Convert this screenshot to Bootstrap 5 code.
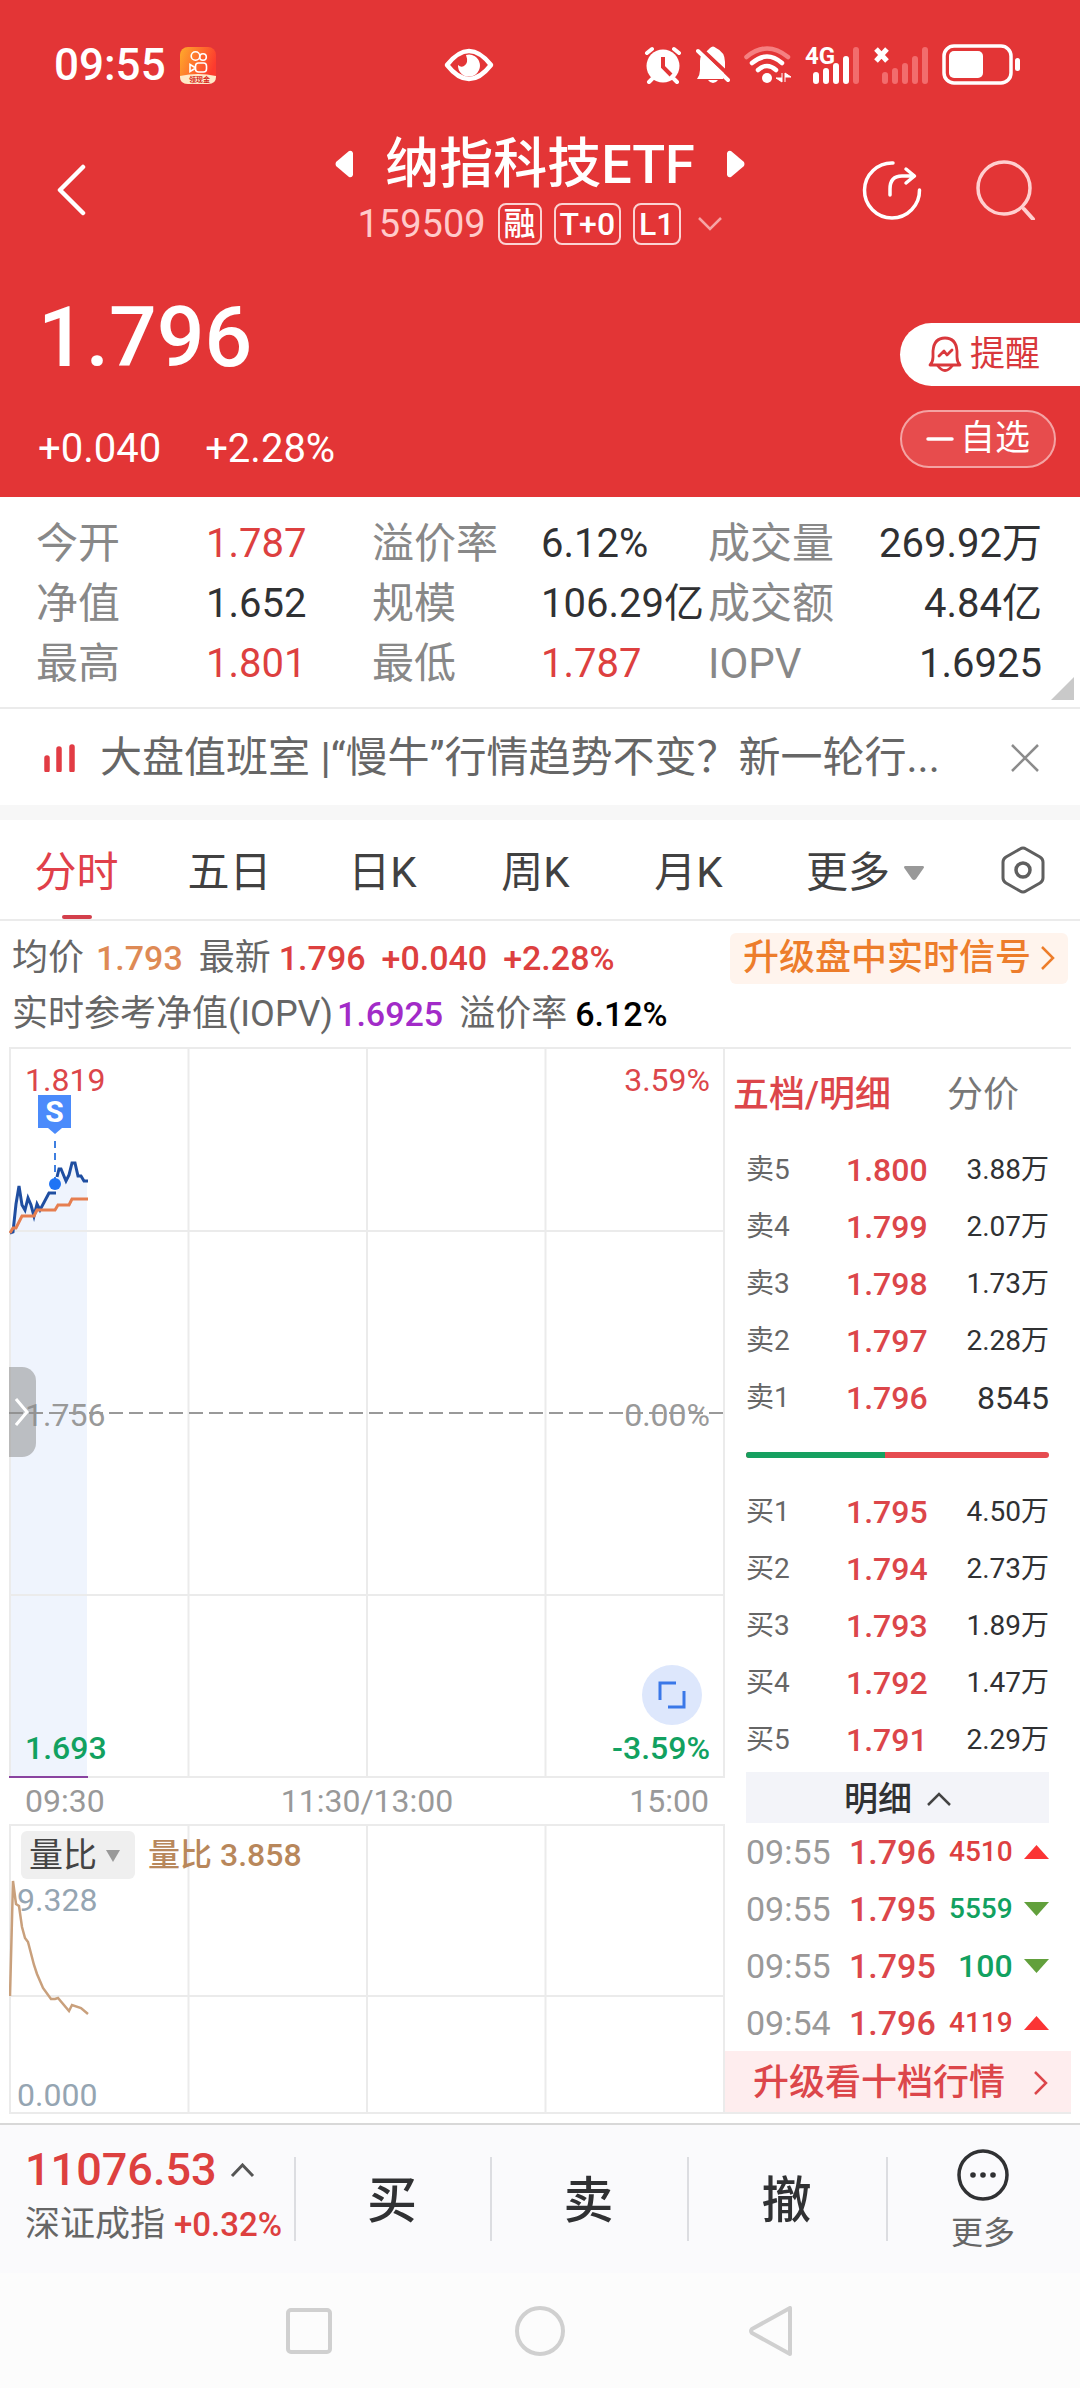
<!DOCTYPE html>
<html lang="zh-CN">
<head>
<meta charset="utf-8">
<meta name="viewport" content="width=device-width, initial-scale=1">
<title>纳指科技ETF 159509</title>
<link rel="stylesheet" href="https://cdn.jsdelivr.net/npm/bootstrap@5.3.0/dist/css/bootstrap.min.css">
<style>
  :root { --brand: #e33536; --up: #dd403f; --down: #12a160; --ink: #303133; --grid: #ebebeb; }
  body { font-family: Roboto, "Noto Sans CJK SC", sans-serif; color: var(--ink); background: #fff; line-height: 1; }
  button, select { font: inherit; color: inherit; background: none; border: 0; padding: 0; line-height: inherit; }
  svg { display: block; flex: none; }
  h1, dl, dd, dt, p { margin: 0; font-weight: inherit; }
  .up { color: var(--up); }
  .down { color: var(--down); }
  .num { font-weight: 500; }

  /* header */
  .quote-head { background: var(--brand); color: #fff; }
  .statusbar { height: 130px; display: grid; grid-template-columns: 390fr 50px 527fr; padding: 0 59px 0 54px; font-size: 44px; font-weight: 500; }
  .clock { gap: 14px; }
  .sys-icons { gap: 14px; }
  .titlebar { display: grid; grid-template-columns: 1fr auto 1fr; padding: 0 44px; height: 118px; }
  .back { padding-left: 12px; text-align: left; }
  .title-line { font-size: 54px; line-height: 66px; gap: 32px; font-weight: 500; }
  .title-line h1 { font-size: 54px; line-height: 66px; font-weight: 500; padding-top: 2px; }
  .sub-line { height: 52px; gap: 12px; }
  .code { font-size: 38px; color: #ffcaca; }
  .tagbox { border: 2px solid #fbd3d3; border-radius: 8px; height: 42px; line-height: 38px; font-size: 32px; padding: 0 4px; font-weight: 500; }
  .head-actions { gap: 54px; }
  .price-zone { padding: 40px 0 23px 38px; }
  .last-price { font-size: 84px; line-height: 100px; font-weight: 500; }
  .change-line { font-size: 40px; line-height: 50px; margin-top: 36px; gap: 44px; }
  .side-actions { width: 180px; padding-top: 45px; gap: 24px; }
  .btn-remind { width: 180px; height: 63px; border-radius: 32px 0 0 32px; background: #fff; color: #d9383c; font-size: 35px; gap: 8px; padding-left: 28px; }
  .btn-watch { width: 156px; height: 58px; border-radius: 30px; background: #e74c4d; border: 2px solid #f4a3a3; font-size: 35px; gap: 6px; }

  /* key figures */
  .figures { position: relative; display: grid; grid-template-columns: 170fr 166fr 169fr 167fr 130fr 204fr; padding: 17px 38px 13px 36px; line-height: 60px; border-bottom: 2px solid var(--grid); white-space: nowrap; }
  .figures dt { font-size: 42px; color: #888; }
  .figures dd { font-size: 40px; }
  .figures dd.last { text-align: right; }
  .corner { position: absolute; right: 6px; bottom: 7px; }

  .news { height: 96px; padding: 2px 41px 0 44px; gap: 25px; font-size: 42px; color: #666; }
  .news a { color: inherit; line-height: 60px; }
  .strip { height: 15px; background: #f7f7f7; }

  /* period tabs */
  .periods { display: grid; grid-template-columns: repeat(5, 153fr) 200fr 115fr; height: 101px; border-bottom: 2px solid var(--grid); font-size: 42px; color: #414141; }
  .periods button { padding-top: 6px; position: relative; }
  .periods .more { gap: 14px; }
  .periods .setup { padding-top: 0; }
  .periods .on { color: #e0404a; }
  .periods .on::after { content: ""; position: absolute; left: 50%; bottom: 0; width: 30px; height: 4px; margin-left: -15px; border-radius: 2px; background: #d33f4b; }

  .legend-rows { padding: 9px 12px 5px 12px; font-size: 36px; color: #666; }
  .legend-rows > div { height: 56px; }
  .legend-rows .num { font-size: 34px; }
  .signal-link { background: #fff4ed; color: #ed7d2b; border-radius: 6px; height: 51px; padding: 0 13px; gap: 10px; text-decoration: none; font-weight: 500; }

  /* chart and order book */
  .board { display: grid; grid-template-columns: 716fr 346fr; margin: 0 9px; border-bottom: 2px solid var(--grid); }
  .plot { position: relative; font-size: 32px; }
  .plot > svg { width: 100%; }
  .plot-main, .plot-main > svg { height: 731px; }
  .plot-sub, .plot-sub > svg { height: 288px; }
  .tick { position: absolute; line-height: 26px; }
  .tick-l { left: 16px; }
  .tick-r { right: 15px; }
  .tick-s { left: 8px; color: #95a5b2; }
  .tick-top { top: 20px; }
  .tick-mid { top: 355px; color: #999; }
  .tick-low { top: 688px; }
  .sell-flag { position: absolute; left: 29px; top: 48px; width: 33px; height: 33px; background: #4b8bfb; color: #fff; font-size: 30px; line-height: 33px; font-weight: 700; text-align: center; }
  .sell-flag::after { content: ""; position: absolute; left: 10px; top: 33px; border: 7px solid transparent; border-top: 6px solid #4b8bfb; border-bottom: 0; }
  .drawer { position: absolute; left: 0; top: 320px; width: 27px; height: 90px; border-radius: 0 14px 14px 0; background: rgba(140, 140, 140, .52); padding-left: 6px; }
  .expand { position: absolute; right: 23px; top: 618px; width: 60px; height: 60px; border-radius: 50%; background: #dde7fc; }
  .axis { display: grid; grid-template-columns: 1fr auto 1fr; padding: 0 16px; height: 46px; font-size: 32px; color: #999; }
  .sub-head { position: absolute; left: 12px; top: 7px; gap: 13px; color: #b8875b; }
  .pick { position: relative; }
  .pick select { appearance: none; width: 114px; height: 48px; padding: 0 0 0 8px; border-radius: 6px; background: #efefef; color: #444; font-size: 34px; line-height: 48px; }
  .pick svg { position: absolute; right: 14px; top: 19px; pointer-events: none; }

  .book { border-top: 2px solid var(--grid); }
  .book-tabs { height: 92px; padding: 0 52px 0 8px; font-size: 36px; color: #777; }
  .book-tabs .on { color: #dc464a; font-weight: 500; }
  .levels { width: 100%; table-layout: fixed; }
  .levels td, .levels th { height: 57px; padding: 0; vertical-align: middle; font-size: 28px; font-weight: 400; line-height: 32px; white-space: nowrap; }
  .levels th { color: #666; }
  .levels .px { font-size: 32px; color: #dc464a; font-weight: 500; }
  .book-body { padding: 0 22px 0 21px; }
  .bidask { height: 57px; }
  .bidask .progress { height: 6px; width: 100%; border-radius: 3px; background: #e64c50; }
  .bidask .progress-bar { background: #16a060; }
  .detail-head { width: 100%; height: 51px; margin-top: 4px; padding-top: 2px; background: #f3f4f9; font-size: 34px; font-weight: 500; gap: 15px; }
  .levels .tm { font-size: 34px; color: #999; }
  .levels .qty { font-weight: 500; }
  .trades .px { font-size: 34px; }
  .levels .big { font-size: 32px; }
  .ten-link { height: 61px; background: #feedee; color: #dc464a; font-size: 36px; padding: 3px 23px 0 28px; text-decoration: none; font-weight: 500; }

  /* trade bar */
  .tradebar { margin-top: 9px; height: 150px; background: #fafafc; border-top: 2px solid #d8d8d8; display: grid; grid-template-columns: 294fr 196fr 197fr 199fr 194fr; font-size: 50px; font-weight: 500; }
  .tradebar > * { position: relative; padding-top: 4px; }
  .tradebar > * + *::before { content: ""; position: absolute; left: 0; top: 32px; width: 2px; height: 84px; background: #dcdde1; }
  .tradebar .index-box { padding: 12px 0 26px 25px; text-align: left; white-space: nowrap; }
  .index-val { font-size: 45px; line-height: 66px; gap: 13px; }
  .index-name { font-size: 35px; line-height: 44px; color: #666; font-weight: 400; gap: 9px; }
  .index-name .num { font-size: 33px; }
  .tradebar .more-box { font-size: 32px; font-weight: 400; color: #666; gap: 16px; padding-top: 0; }
  .softkeys { height: 115px; background: #fcfcfc; gap: 183px; }
</style>
</head>
<body>
<header class="quote-head">
  <div class="statusbar align-items-center">
    <div class="clock d-flex align-items-center"><span>09:55</span>
      <svg width="36" height="37" viewBox="0 0 36 37"><defs><linearGradient id="ks" x1="0" y1="0" x2="1" y2="0.4"><stop offset="0" stop-color="#ffac2b"/><stop offset="1" stop-color="#fd3a2e"/></linearGradient></defs><rect width="36" height="37" rx="8" fill="url(#ks)"/><path d="M0 29Q18 25 36 29V30Q36 37 28 37H8Q0 37 0 30Z" fill="#ffe9c8"/><g fill="none" stroke="#fff" stroke-width="1.6"><circle cx="15.500" cy="9" r="4.300"/><circle cx="23" cy="10" r="3.300"/><rect x="15.500" y="16" width="11" height="9" rx="3"/><path d="M15 20.500l-5-3v7l5-3"/></g><text x="9" y="35" font-size="7" font-weight="700" fill="#d4281c">领现金</text></svg>
    </div>
    <svg width="50" height="34" viewBox="0 0 50 34"><path d="M3 17Q14 3 25 3T47 17Q36 31 25 31T3 17Z" fill="none" stroke="#fff" stroke-width="4.500" stroke-linejoin="round"/><path d="M22 7A11 11 0 1 1 14 17Q17 20 20 18Q25 15 22 7Z" fill="#fff"/></svg>
    <div class="sys-icons d-flex align-items-center justify-content-end">
      <svg width="38" height="38" viewBox="0 0 38 38"><circle cx="19" cy="20" r="16.500" fill="#fff"/><path d="M3 7l5-4M35 7l-5-4M8 33l-3 3M30 33l3 3" stroke="#fff" stroke-width="4" stroke-linecap="round"/><path d="M19 11v10l8 8" fill="none" stroke="#e33536" stroke-width="4"/></svg>
      <svg width="34" height="38" viewBox="0 0 34 38"><path d="M10 6Q13 3 14 2Q17-1 20 2Q29 6 29 16V22L27 33H1Q4 29 4 24V15Q4 12 5 10Z" fill="#fff"/><path d="M3 1L34 30" stroke="#e33536" stroke-width="4"/><path d="M2 5L32 34" stroke="#fff" stroke-width="4" stroke-linecap="round"/><path d="M12 34h10q-2 3-5 3t-5-3z" fill="#fff"/></svg>
      <svg width="47" height="38" viewBox="0 0 47 38"><g fill="none" stroke-width="4.500" stroke-linecap="round"><path d="M2.500 11Q23-6 44 11" stroke="#f58081"/><path d="M8 17Q23 4 38 17M14 24Q23 16 32 24" stroke="#fff"/></g><circle cx="23" cy="32" r="5" fill="#fff"/><path d="M38 27v9l-6-4h6M41 36v-9l6 4h-6" fill="#fff" stroke="#fff"/></svg>
      <svg width="55" height="50" viewBox="0 -6 55 50"><text x="0" y="18" font-size="24" font-weight="700" fill="#fff">4G</text><g stroke-width="6" stroke-linecap="round"><path d="M11 29v6M21 25v10M31 20v15M41 13v22" stroke="#fff"/><path d="M51 4v31" stroke="#f26c6d"/></g></svg>
      <svg width="54" height="38" viewBox="0 0 54 38"><path d="M2 3l11 12M13 3L2 15" stroke="#fff" stroke-width="5"/><path d="M11 29v6M21 25v10M31 20v15M41 13v22M51 4v31" stroke="#f26c6d" stroke-width="6" stroke-linecap="round"/></svg>
      <svg width="79" height="42" viewBox="0 0 79 42"><rect x="2" y="2" width="67" height="37" rx="10" fill="none" stroke="#fff" stroke-width="3.500"/><rect x="7" y="7" width="34" height="27" rx="5" fill="#fff"/><rect x="73" y="14" width="5" height="13" rx="2.500" fill="#fff"/></svg>
    </div>
  </div>

  <div class="titlebar align-items-center">
    <button type="button" aria-label="返回" class="back"><svg width="30" height="52" viewBox="0 0 30 52"><path d="M27 3L4 26l23 23" fill="none" stroke="#fff" stroke-width="4.500" stroke-linecap="round" stroke-linejoin="round"/></svg></button>
    <div>
      <div class="title-line d-flex align-items-center justify-content-center">
        <button type="button" aria-label="上一只"><svg width="18" height="28" viewBox="0 0 18 28"><path d="M18 3v22q-1 3-4 2L1 16q-1-2 0-4L14 1q3-1 4 2z" fill="#fff"/></svg></button>
        <h1>纳指科技ETF</h1>
        <button type="button" aria-label="下一只"><svg width="18" height="28" viewBox="0 0 18 28"><path d="M0 3v22q1 3 4 2L17 16q1-2 0-4L4 1q-3-1-4 2z" fill="#fff"/></svg></button>
      </div>
      <div class="sub-line d-flex align-items-center justify-content-center">
        <span class="code">159509</span><span class="tagbox">融</span><span class="tagbox">T+0</span><span class="tagbox">L1</span>
        <svg class="ms-1" width="26" height="16" viewBox="0 0 26 16"><path d="M2 2l11 11L24 2" fill="none" stroke="#f6a5a6" stroke-width="2.500"/></svg>
      </div>
    </div>
    <div class="head-actions d-flex justify-content-end align-items-center">
      <button type="button" aria-label="分享"><svg width="60" height="60" viewBox="0 0 60 60" fill="none" stroke="#fff" stroke-width="3.500" stroke-linecap="round" stroke-linejoin="round"><path d="M31 3A27.500 27.500 0 1 0 57.500 30M28 35V29Q28 16 40 16H52M44 9l8.500 7-8.500 7"/></svg></button>
      <button type="button" aria-label="搜索"><svg width="60" height="60" viewBox="0 0 60 60" fill="none" stroke="#ffcfcf" stroke-width="3.500" stroke-linecap="round"><circle cx="28" cy="28" r="26"/><path d="M48 49l9 10" stroke-width="4"/></svg></button>
    </div>
  </div>

  <div class="d-flex justify-content-between">
    <div class="price-zone">
      <div class="last-price">1.796</div>
      <div class="change-line d-flex"><span>+0.040</span><span>+2.28%</span></div>
    </div>
    <div class="side-actions d-flex flex-column mt-auto mb-auto">
      <button type="button" class="btn-remind d-flex align-items-center"><svg width="34" height="36" viewBox="0 0 34 36" fill="none" stroke="#d9383c" stroke-width="2.800" stroke-linecap="round" stroke-linejoin="round"><path d="M2 29q3-3 3-8V15Q6 2 17 2T29 15v6q0 5 3 8Z"/><path d="M10 30q7 9 14 0" /><path d="M11 20l5-5 3 4 5-5"/></svg>提醒</button>
      <button type="button" class="btn-watch d-flex align-items-center justify-content-center"><svg width="28" height="4" viewBox="0 0 28 4"><path d="M2 2h24" stroke="#fff" stroke-width="3.500" stroke-linecap="round"/></svg>自选</button>
    </div>
  </div>
</header>

<dl class="figures">
  <dt>今开</dt><dd class="up">1.787</dd><dt>溢价率</dt><dd>6.12%</dd><dt>成交量</dt><dd class="last">269.92万</dd>
  <dt>净值</dt><dd>1.652</dd><dt>规模</dt><dd>106.29亿</dd><dt>成交额</dt><dd class="last">4.84亿</dd>
  <dt>最高</dt><dd class="up">1.801</dd><dt>最低</dt><dd class="up">1.787</dd><dt>IOPV</dt><dd class="last">1.6925</dd>
  <svg class="corner" width="23" height="23" viewBox="0 0 23 23"><path d="M23 0v23H0z" fill="#c9c9c9"/></svg>
</dl>

<div class="news d-flex align-items-center">
  <svg width="31" height="28" viewBox="0 0 31 28"><path d="M3 14v12M15 5v21M28 3v23" stroke="#e23c44" stroke-width="5.500" stroke-linecap="round"/></svg>
  <a href="#" class="flex-grow-1 text-truncate text-decoration-none">大盘值班室 |“慢牛”行情趋势不变？新一轮行...</a>
  <button type="button" aria-label="关闭"><svg width="28" height="28" viewBox="0 0 28 28"><path d="M1 1l26 26M27 1L1 27" stroke="#8c8c8c" stroke-width="2.500"/></svg></button>
</div>
<div class="strip"></div>

<nav class="periods">
  <button type="button" class="on">分时</button>
  <button type="button">五日</button>
  <button type="button">日K</button>
  <button type="button">周K</button>
  <button type="button">月K</button>
  <button type="button" class="more d-flex align-items-center justify-content-center">更多<svg width="20" height="14" viewBox="0 0 20 14"><path d="M1 0h18q2 1 0 3l-7 10q-2 2-4 0L1 3Q-1 1 1 0z" fill="#999"/></svg></button>
  <button type="button" aria-label="设置" class="setup d-flex align-items-center justify-content-center"><svg width="44" height="48" viewBox="0 0 44 48" fill="none" stroke="#5f5f5f" stroke-width="3"><path d="M19 3q3-2 6 0l14 8q3 2 3 5v16q0 3-3 5l-14 8q-3 2-6 0L5 37q-3-2-3-5V16q0-3 3-5z"/><circle cx="22" cy="24" r="7" stroke-width="3.500"/></svg></button>
</nav>

<section class="legend-rows">
  <div class="d-flex align-items-center">
    <span>均价</span><span class="num ms-2 ps-1" style="color:#de8a55">1.793</span>
    <span class="ms-3">最新</span><span class="num up ms-2">1.796</span><span class="num up ms-3">+0.040</span><span class="num up ms-3">+2.28%</span>
    <a href="#" class="signal-link d-flex align-items-center ms-auto">升级盘中实时信号<svg width="14" height="26" viewBox="0 0 14 26"><path d="M1 2l11 11L1 24" fill="none" stroke="#ed7d2b" stroke-width="2.500"/></svg></a>
  </div>
  <div class="d-flex align-items-center">
    <span>实时参考净值(IOPV)</span><span class="num ms-1" style="color:#a22bc8">1.6925</span><span class="ms-3">溢价率</span><span class="num text-black ms-2">6.12%</span>
  </div>
</section>

<main class="board">
  <section>
    <div class="plot plot-main">
      <svg viewBox="0 0 716 731" preserveAspectRatio="none">
        <path d="M1 186L4 185L7 157L10 139L13 158L16 163L19 151L22 158L25 169L28 157L31 163L40 146L47 146L50 125L57 134L60 128L63 116L66 116L69 129L72 129L75 134L78 134V729H1Z" fill="#eff4fd"/>
        <g stroke="#ebebeb" stroke-width="2" fill="none"><rect x="1" y="1" width="714" height="729"/><path d="M179.500 0V731M358 0V731M536.500 0V731M0 184H716M0 548H716"/></g>
        <path d="M0 366H716" stroke="#999" stroke-width="2" stroke-dasharray="14 6"/>
        <path d="M1 186L4 185L7 157L10 139L13 158L16 163L19 151L22 158L25 169L28 157L31 163L40 146L47 146M48 130L50 122H52L57 134L60 128L63 116H66L69 129H72L75 134H79" fill="none" stroke="#1f4ea1" stroke-width="3"/>
        <path d="M1 186L4 181H7L13 169H25L28 163H46L49 158H60L63 152H79" fill="none" stroke="#e67e50" stroke-width="3"/>
        <path d="M46 94V132" stroke="#3f7fe0" stroke-width="2" stroke-dasharray="7 5"/>
        <circle cx="46" cy="137" r="6" fill="#1f74f5"/>
        <path d="M0 730H79" stroke="#8a44a0" stroke-width="2"/>
      </svg>
      <span class="tick tick-l tick-top" style="color:#dc464a">1.819</span>
      <span class="tick tick-r tick-top" style="color:#dc464a">3.59%</span>
      <span class="tick tick-l tick-mid">1.756</span>
      <span class="tick tick-r tick-mid">0.00%</span>
      <span class="tick tick-l tick-low down num">1.693</span>
      <span class="tick tick-r tick-low down num">-3.59%</span>
      <span class="sell-flag">S</span>
      <button type="button" class="drawer" aria-label="展开侧栏"><svg width="14" height="30" viewBox="0 0 14 30"><path d="M1 2l11 13L1 28" fill="none" stroke="#fff" stroke-width="3"/></svg></button>
      <button type="button" class="expand d-flex align-items-center justify-content-center" aria-label="全屏"><svg width="28" height="28" viewBox="0 0 28 28" fill="none" stroke="#3a78e8" stroke-width="3"><path d="M18 2H2v17M26 10v16H10"/></svg></button>
    </div>
    <div class="axis align-items-center"><span>09:30</span><span>11:30/13:00</span><span class="text-end">15:00</span></div>
    <div class="plot plot-sub">
      <svg viewBox="0 0 716 288" preserveAspectRatio="none">
        <path d="M0 1H716M1 0V288M179.500 0V288M358 0V288M536.500 0V288M715 0V288M0 172H716" stroke="#ebebeb" stroke-width="2"/>
        <path d="M1 172L4 57L7 80L10 82L13 103L16 114L19 118L25 141L28 150L34 164L42 175H46L49 174L60 187L63 181L72 184L79 190" fill="none" stroke="#c9a07c" stroke-width="2.500"/>
      </svg>
      <div class="sub-head d-flex align-items-center">
        <label class="pick"><select aria-label="指标"><option>量比</option></select><svg width="16" height="12" viewBox="0 0 16 12"><path d="M1 0h14l-7 12z" fill="#999"/></svg></label>
        <span class="num">量比 3.858</span>
      </div>
      <span class="tick tick-s" style="top:63px">9.328</span>
      <span class="tick tick-s" style="top:258px">0.000</span>
    </div>
  </section>

  <section class="book">
    <div class="book-tabs d-flex justify-content-between align-items-center"><button type="button" class="on">五档/明细</button><button type="button">分价</button></div>
    <div class="book-body">
      <table class="levels">
        <colgroup><col style="width:33%"><col style="width:30%"><col></colgroup>
        <tbody>
          <tr><th>卖5</th><td class="px">1.800</td><td class="text-end">3.88万</td></tr>
          <tr><th>卖4</th><td class="px">1.799</td><td class="text-end">2.07万</td></tr>
          <tr><th>卖3</th><td class="px">1.798</td><td class="text-end">1.73万</td></tr>
          <tr><th>卖2</th><td class="px">1.797</td><td class="text-end">2.28万</td></tr>
          <tr><th>卖1</th><td class="px">1.796</td><td class="text-end big">8545</td></tr>
        </tbody>
      </table>
      <div class="bidask d-flex align-items-center"><div class="progress"><div class="progress-bar" style="width:46%"></div></div></div>
      <table class="levels">
        <colgroup><col style="width:33%"><col style="width:30%"><col></colgroup>
        <tbody>
          <tr><th>买1</th><td class="px">1.795</td><td class="text-end">4.50万</td></tr>
          <tr><th>买2</th><td class="px">1.794</td><td class="text-end">2.73万</td></tr>
          <tr><th>买3</th><td class="px">1.793</td><td class="text-end">1.89万</td></tr>
          <tr><th>买4</th><td class="px">1.792</td><td class="text-end">1.47万</td></tr>
          <tr><th>买5</th><td class="px">1.791</td><td class="text-end">2.29万</td></tr>
        </tbody>
      </table>
      <button type="button" class="detail-head d-flex align-items-center justify-content-center">明细<svg width="24" height="14" viewBox="0 0 24 14"><path d="M1 13L12 2l11 11" fill="none" stroke="#444" stroke-width="2.500"/></svg></button>
      <table class="levels trades">
        <colgroup><col style="width:34%"><col style="width:27%"><col><col style="width:12%"></colgroup>
        <tbody>
          <tr><td class="tm">09:55</td><td class="px">1.796</td><td class="text-end qty up">4510</td><td><svg class="ms-auto" width="25" height="14" viewBox="0 0 25 14"><path d="M0 14L12.500 0 25 14z" fill="#fb3434"/></svg></td></tr>
          <tr><td class="tm">09:55</td><td class="px">1.795</td><td class="text-end qty down">5559</td><td><svg class="ms-auto" width="25" height="14" viewBox="0 0 25 14"><path d="M0 0L12.500 14 25 0z" fill="#62a03c"/></svg></td></tr>
          <tr><td class="tm">09:55</td><td class="px">1.795</td><td class="text-end qty down big">100</td><td><svg class="ms-auto" width="25" height="14" viewBox="0 0 25 14"><path d="M0 0L12.500 14 25 0z" fill="#62a03c"/></svg></td></tr>
          <tr><td class="tm">09:54</td><td class="px">1.796</td><td class="text-end qty up">4119</td><td><svg class="ms-auto" width="25" height="14" viewBox="0 0 25 14"><path d="M0 14L12.500 0 25 14z" fill="#fb3434"/></svg></td></tr>
        </tbody>
      </table>
    </div>
    <a href="#" class="ten-link d-flex align-items-center justify-content-between">升级看十档行情<svg width="14" height="26" viewBox="0 0 14 26"><path d="M1 2l11 11L1 24" fill="none" stroke="#dc464a" stroke-width="2.500"/></svg></a>
  </section>
</main>

<footer>
  <div class="tradebar">
    <button type="button" class="index-box">
      <span class="index-val up d-flex align-items-center">11076.53<svg width="25" height="15" viewBox="0 0 25 15"><path d="M2 13L12.500 2 23 13" fill="none" stroke="#555" stroke-width="3"/></svg></span>
      <span class="index-name d-flex align-items-center">深证成指<span class="num up">+0.32%</span></span>
    </button>
    <button type="button">买</button>
    <button type="button">卖</button>
    <button type="button">撤</button>
    <button type="button" class="more-box d-flex flex-column align-items-center justify-content-center"><svg width="52" height="52" viewBox="0 0 52 52"><circle cx="26" cy="26" r="24" fill="none" stroke="#303133" stroke-width="3.500"/><g fill="#303133"><circle cx="16" cy="26" r="2.800"/><circle cx="26" cy="26" r="2.800"/><circle cx="36" cy="26" r="2.800"/></g></svg>更多</button>
  </div>
  <div class="softkeys d-flex align-items-center justify-content-center">
    <svg width="46" height="46" viewBox="0 0 46 46"><rect x="2" y="2" width="42" height="42" rx="3" fill="none" stroke="#d0d0d0" stroke-width="4"/></svg>
    <svg width="50" height="50" viewBox="0 0 50 50"><circle cx="25" cy="25" r="23" fill="none" stroke="#d0d0d0" stroke-width="4"/></svg>
    <svg width="46" height="50" viewBox="0 0 46 50"><path d="M42 2v46L4 27q-2-2 0-4z" fill="none" stroke="#d0d0d0" stroke-width="4" stroke-linejoin="round"/></svg>
  </div>
</footer>
<script src="https://cdn.jsdelivr.net/npm/bootstrap@5.3.0/dist/js/bootstrap.bundle.min.js"></script>
</body>
</html>
